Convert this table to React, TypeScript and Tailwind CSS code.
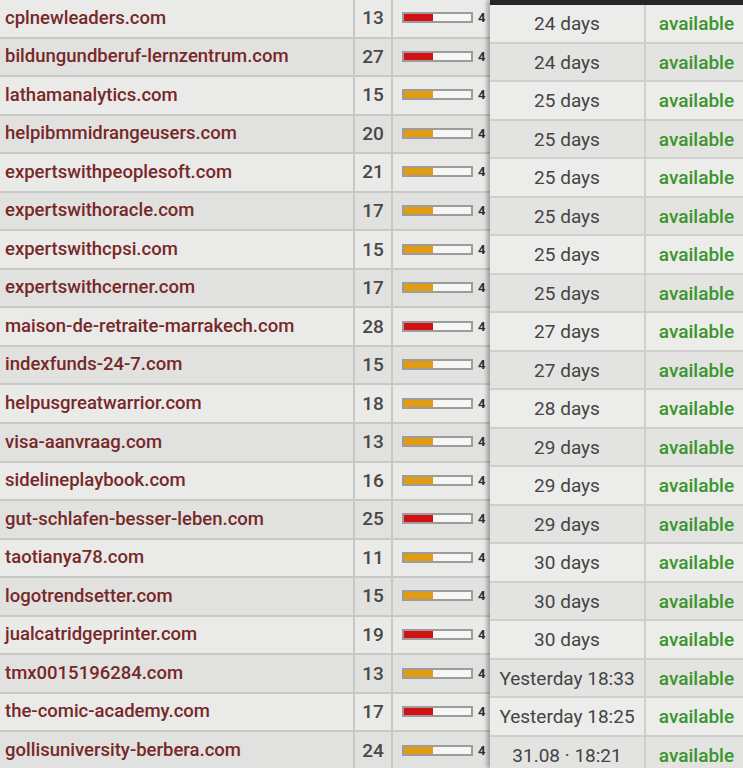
import React from "react";

type Row = [string, number, "r" | "o"];

const left: Row[] = [
  ["cplnewleaders.com", 13, "r"],
  ["bildungundberuf-lernzentrum.com", 27, "r"],
  ["lathamanalytics.com", 15, "o"],
  ["helpibmmidrangeusers.com", 20, "o"],
  ["expertswithpeoplesoft.com", 21, "o"],
  ["expertswithoracle.com", 17, "o"],
  ["expertswithcpsi.com", 15, "o"],
  ["expertswithcerner.com", 17, "o"],
  ["maison-de-retraite-marrakech.com", 28, "r"],
  ["indexfunds-24-7.com", 15, "o"],
  ["helpusgreatwarrior.com", 18, "o"],
  ["visa-aanvraag.com", 13, "o"],
  ["sidelineplaybook.com", 16, "o"],
  ["gut-schlafen-besser-leben.com", 25, "r"],
  ["taotianya78.com", 11, "o"],
  ["logotrendsetter.com", 15, "o"],
  ["jualcatridgeprinter.com", 19, "r"],
  ["tmx0015196284.com", 13, "o"],
  ["the-comic-academy.com", 17, "r"],
  ["gollisuniversity-berbera.com", 24, "o"],
];

const right: string[] = [
  "24 days",
  "24 days",
  "25 days",
  "25 days",
  "25 days",
  "25 days",
  "25 days",
  "25 days",
  "27 days",
  "27 days",
  "28 days",
  "29 days",
  "29 days",
  "29 days",
  "30 days",
  "30 days",
  "30 days",
  "Yesterday 18:33",
  "Yesterday 18:25",
  "31.08 · 18:21",
];

export default function App() {
  return (
    <div
      className="flex w-[743px] h-[768px] overflow-hidden bg-[#e6e6e4]"
      style={{ fontFamily: "Roboto, 'Noto Sans', sans-serif" }}
    >
      <div className="w-[490px] flex flex-col shrink-0">
        {left.map(([d, n, c], i) => (
          <div
            key={i}
            className={`flex h-[38.55px] shrink-0 border-b-2 border-[#c8c8c6] ${
              i % 2 === 0 ? "bg-[#eaeae8]" : "bg-[#e1e1df]"
            }`}
          >
            <div className="w-[355px] shrink-0 border-r-2 border-[#c8c8c6] flex items-center pl-[5px] text-[18.5px] font-medium text-[#772828] leading-none pb-[1px]">
              {d}
            </div>
            <div className="w-[38px] shrink-0 border-r-2 border-[#c8c8c6] flex items-center justify-center text-[19px] font-medium text-[#484848] leading-none pb-[1px]">
              {n}
            </div>
            <div className="flex-1 flex items-center pl-[9px] pb-[1px]">
              <div className="w-[71px] h-[11px] border-2 border-[#9c9c9c] bg-[#f6f6f4] flex">
                <div
                  className={`w-[29px] h-full ${
                    c === "r" ? "bg-[#d01212]" : "bg-[#e29c12]"
                  }`}
                />
              </div>
              <span className="ml-[5px] text-[13px] font-bold text-[#2e2e2e] leading-none">
                4
              </span>
            </div>
          </div>
        ))}
      </div>
      <div className="flex-1 flex flex-col relative z-10 shadow-[-3px_0_4px_rgba(0,0,0,0.3)] bg-[#e8e8e6]">
        <div className="h-[5px] shrink-0 bg-[#262626]" />
        {right.map((t, i) => (
          <div
            key={i}
            className={`flex h-[38.5px] shrink-0 border-b-2 border-[#cfcfcd] ${
              i % 2 === 0 ? "bg-[#ececea]" : "bg-[#e3e3e1]"
            }`}
          >
            <div className="w-[156px] shrink-0 border-r-2 border-[#cfcfcd] flex items-center justify-center text-[19px] text-[#444] leading-none pt-[1px]">
              {t}
            </div>
            <div className="flex-1 flex items-center justify-center pl-[4px] text-[19px] font-medium text-[#3a952c] leading-none pt-[1px]">
              available
            </div>
          </div>
        ))}
      </div>
    </div>
  );
}
